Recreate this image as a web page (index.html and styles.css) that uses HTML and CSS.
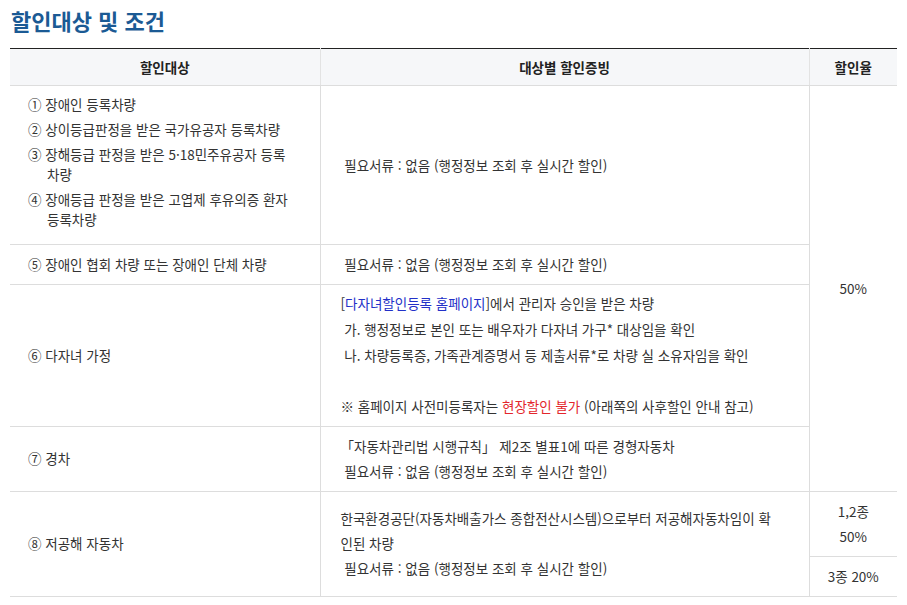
FILE: index.html
```html
<!DOCTYPE html>
<html lang="ko">
<head>
  <meta charset="UTF-8">
  <title>할인대상 및 조건</title>
  <link rel="stylesheet" href="styles.css">
</head>
<body>

  <h2 class="title">할인대상 및 조건</h2>

  <table class="cond-table">
    <colgroup>
      <col class="col-target">
      <col class="col-proof">
      <col class="col-rate">
    </colgroup>
    <thead>
      <tr>
        <th>할인대상</th>
        <th>대상별 할인증빙</th>
        <th>할인율</th>
      </tr>
    </thead>
    <tbody>
      <tr>
        <td class="list-cell">
          <ul class="num-list">
            <li>① 장애인 등록차량</li>
            <li>② 상이등급판정을 받은 국가유공자 등록차량</li>
            <li>③ 장해등급 판정을 받은 5·18민주유공자 등록 차량</li>
            <li>④ 장애등급 판정을 받은 고엽제 후유의증 환자 등록차량</li>
          </ul>
        </td>
        <td>&nbsp;필요서류 : 없음 (행정정보 조회 후 실시간 할인)</td>
        <td class="rate" rowspan="4">50%</td>
      </tr>
      <tr>
        <td>⑤ 장애인 협회 차량 또는 장애인 단체 차량</td>
        <td>&nbsp;필요서류 : 없음 (행정정보 조회 후 실시간 할인)</td>
      </tr>
      <tr>
        <td>⑥ 다자녀 가정</td>
        <td class="multi">
          [<span class="link">다자녀할인등록 홈페이지</span>]에서 관리자 승인을 받은 차량<br>
          &nbsp;가. 행정정보로 본인 또는 배우자가 다자녀 가구* 대상임을 확인<br>
          &nbsp;나. 차량등록증, 가족관계증명서 등 제출서류*로 차량 실 소유자임을 확인<br>
          <br>
          ※ 홈페이지 사전미등록자는 <span class="warn">현장할인 불가</span> (아래쪽의 사후할인 안내 참고)
        </td>
      </tr>
      <tr>
        <td>⑦ 경차</td>
        <td>
          「자동차관리법 시행규칙」 제2조 별표1에 따른 경형자동차<br>
          &nbsp;필요서류 : 없음 (행정정보 조회 후 실시간 할인)
        </td>
      </tr>
      <tr>
        <td rowspan="2">⑧ 저공해 자동차</td>
        <td class="narrow" rowspan="2">
          한국환경공단(자동차배출가스 종합전산시스템)으로부터 저공해자동차임이 확인된 차량<br>
          &nbsp;필요서류 : 없음 (행정정보 조회 후 실시간 할인)
        </td>
        <td class="rate">1,2종<br>50%</td>
      </tr>
      <tr>
        <td class="rate">3종 20%</td>
      </tr>
    </tbody>
  </table>

</body>
</html>
```

FILE: styles.css
```css
/* 기본 */
body {
  margin: 0;
  padding: 0 10px;
  font-family: "Noto Sans CJK KR", "Noto Sans", sans-serif;
  font-size: 13.5px;
  color: #333;
  background: #fff;
}

/* 제목 */
.title {
  margin: 0;
  padding: 5px 0 0 1px;
  height: 48px;
  box-sizing: border-box;
  font-size: 22px;
  line-height: 30px;
  font-weight: bold;
  color: #1b5a94;
}

/* 표 */
.cond-table {
  width: 887px;
  border-collapse: collapse;
  table-layout: fixed;
  border-top: 1px solid #222;
}
.col-target { width: 310px; }
.col-proof { width: 489px; }
.col-rate { width: 88px; }

.cond-table th {
  background: #f6f7f9;
  color: #222;
  font-weight: bold;
  height: 36px;
  padding: 0;
  line-height: 20px;
  border-bottom: 1px solid #ddd;
  border-left: 1px solid #e3e3e3;
}
.cond-table th:first-child { border-left: none; }

.cond-table td {
  padding: 7px 20px;
  line-height: 25px;
  vertical-align: middle;
  text-align: left;
  border-bottom: 1px solid #ddd;
  border-left: 1px solid #ddd;
}
.cond-table td:first-child { padding-left: 18px; }
.cond-table tbody tr:first-child td:first-child,
.cond-table tbody tr:nth-child(2) td:first-child,
.cond-table tbody tr:nth-child(3) td:first-child,
.cond-table tbody tr:nth-child(4) td:first-child,
.cond-table tbody tr:nth-child(5) td:first-child { border-left: none; }

.cond-table td.rate {
  text-align: center;
  padding: 7px 4px;
}
.cond-table td.multi {
  padding: 6px 20px;
  line-height: 25.8px;
}
.cond-table td.narrow {
  padding-right: 30px;
}

/* 번호 목록 */
.cond-table td.list-cell {
  padding: 8px 18px 15px;
}
.num-list {
  list-style: none;
  margin: 0;
  padding: 0 0 0 19px;
}
.num-list li {
  line-height: 20px;
  text-indent: -19px;
  margin-bottom: 5px;
}
.num-list li:last-child { margin-bottom: 0; }

/* 강조 */
.link { color: #2330c8; }
.warn { color: #e3262c; }
```
